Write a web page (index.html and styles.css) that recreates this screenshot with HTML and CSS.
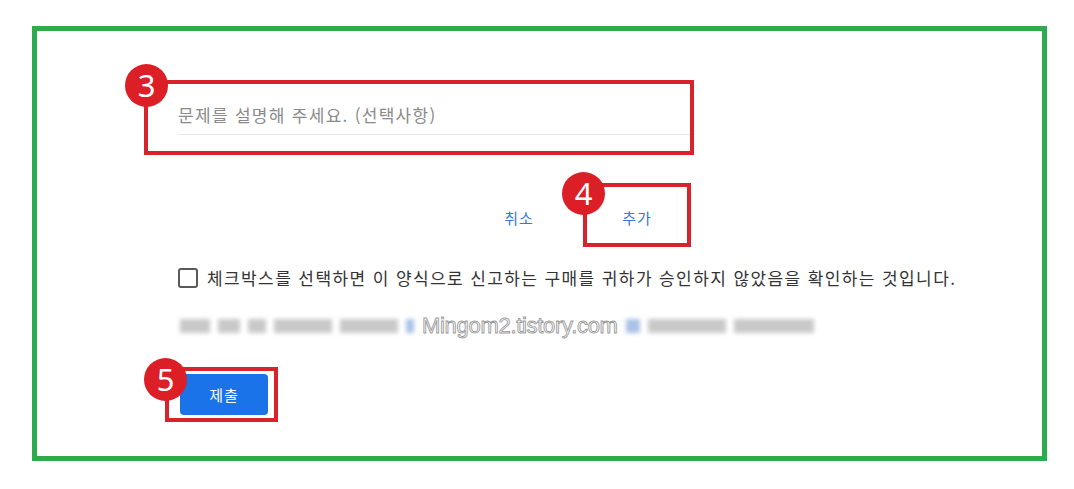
FILE: index.html
```html
<!DOCTYPE html>
<html lang="ko">
<head>
    <meta charset="UTF-8">
    <title>신고</title>
    <link rel="stylesheet" href="styles.css">
</head>
<body>
    <div class="frame">
        <div class="mark mark-desc">
            <span class="badge badge-desc">3</span>
            <div class="desc-field">문제를 설명해 주세요. (선택사항)</div>
        </div>

        <div class="actions">
            <span class="text-btn">취소</span>
            <div class="mark mark-add">
                <span class="badge badge-add">4</span>
                <span class="text-btn">추가</span>
            </div>
        </div>

        <label class="agree">
            <span class="checkbox"></span>
            <span class="agree-text">체크박스를 선택하면 이 양식으로 신고하는 구매를 귀하가 승인하지 않았음을 확인하는 것입니다.</span>
        </label>

        <div class="blurred">
            <span class="blk" style="width: 30px"></span>
            <span class="blk" style="width: 22px"></span>
            <span class="blk" style="width: 18px"></span>
            <span class="blk" style="width: 58px"></span>
            <span class="blk" style="width: 58px"></span>
            <span class="blk blue" style="width: 8px"></span>
            <span class="watermark">Mingom2.tistory.com</span>
            <span class="blk blue" style="width: 14px"></span>
            <span class="blk" style="width: 78px"></span>
            <span class="blk" style="width: 80px"></span>
        </div>

        <div class="mark mark-submit">
            <span class="badge badge-submit">5</span>
            <button class="submit">제출</button>
        </div>
    </div>
</body>
</html>
```

FILE: styles.css
```css
body {
    margin: 0;
    background: #fff;
    font-family: "Noto Sans CJK KR", "Noto Sans", sans-serif;
}

.frame {
    box-sizing: border-box;
    width: 1015px;
    height: 435px;
    margin: 26px 0 0 32px;
    border: 5px solid #2eaa4f;
    display: flex;
    flex-direction: column;
    align-items: flex-start;
}

/* red annotation boxes */
.mark {
    position: relative;
    box-sizing: border-box;
    border: 4px solid #d6232c;
}

.badge {
    position: absolute;
    width: 43px;
    height: 43px;
    border-radius: 50%;
    background: #dc1f26;
    color: #fff;
    font-family: "Noto Sans", sans-serif;
    font-size: 31px;
    line-height: 43px;
    text-align: center;
    z-index: 2;
}

.mark-desc {
    margin: 49px 0 0 107px;
    width: 550px;
    height: 75px;
    padding: 14px 0 0 30px;
}

.badge-desc {
    left: -23px;
    top: -20px;
}

.desc-field {
    height: 36px;
    line-height: 34px;
    border-bottom: 1px solid #e8e8e8;
    color: #8a8a8a;
    font-size: 17px;
    letter-spacing: 1.3px;
}

.actions {
    margin: 28px 0 0 450px;
    display: flex;
    align-items: center;
    gap: 32px;
}

.text-btn {
    width: 64px;
    text-align: center;
    color: #3a78d4;
    font-size: 15px;
    letter-spacing: 1px;
    line-height: 20px;
    padding-top: 5px;
}

.mark-add {
    width: 108px;
    height: 64px;
    display: flex;
    align-items: center;
    justify-content: center;
    padding-top: 1px;
}

.badge-add {
    left: -25px;
    top: -15px;
}

.agree {
    margin: 18px 0 0 141px;
    display: flex;
    align-items: center;
    gap: 9px;
}

.checkbox {
    box-sizing: border-box;
    width: 20px;
    height: 20px;
    border: 2px solid #5a5a5a;
    border-radius: 3px;
}

.agree-text {
    color: #333;
    font-size: 17px;
    letter-spacing: 1.4px;
}

.blurred {
    margin: 26px 0 0 143px;
    height: 20px;
    display: flex;
    align-items: center;
    gap: 8px;
}

.blk {
    height: 14px;
    background: #c9c9c9;
    filter: blur(2px);
}

.blk.blue {
    background: #a9c2e6;
}

.watermark {
    font-family: "Liberation Sans", sans-serif;
    font-size: 22px;
    color: #fff;
    -webkit-text-stroke: 0.9px #9a9a9a;
    letter-spacing: -0.3px;
}

.mark-submit {
    margin: 31px 0 0 128px;
    width: 113px;
    height: 55px;
    padding: 3px 0 0 11px;
}

.badge-submit {
    left: -25px;
    top: -13px;
}

.submit {
    width: 88px;
    height: 41px;
    border: none;
    border-radius: 4px;
    background: #1a73e8;
    color: #fff;
    font-family: "Noto Sans CJK KR", sans-serif;
    font-size: 15px;
    letter-spacing: 1px;
}
```
